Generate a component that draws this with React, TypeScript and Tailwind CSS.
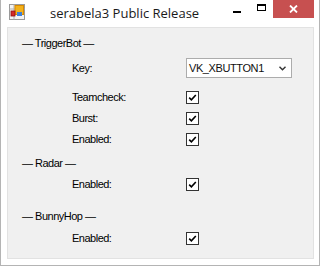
import React from 'react';

const labelFont = { fontFamily: '"Liberation Sans", Arial, sans-serif' };

function AppIcon() {
  return (
    <svg width="16" height="16" viewBox="0 0 16 16">
      <rect x="0.5" y="0.5" width="15" height="15" fill="#f4f4f4" stroke="#9a9a9a" />
      <line x1="0.5" y1="5" x2="15.5" y2="5" stroke="#b0b0b0" />
      <line x1="5" y1="0.5" x2="5" y2="15.5" stroke="#b0b0b0" />
      <rect x="6" y="1.5" width="8.5" height="9" fill="#f3b21b" stroke="#d98a00" />
      <rect x="8" y="8" width="5" height="4" fill="#3f7fd8" />
      <rect x="2" y="7" width="4" height="5" fill="#d42a2a" stroke="#8e1111" strokeWidth="0.8" />
    </svg>
  );
}

function CheckBox() {
  return (
    <div className="w-[13px] h-[13px] border border-[#333333] bg-white flex items-center justify-center">
      <svg width="9" height="9" viewBox="0 0 9 9">
        <path d="M1.2 4.6 L3.4 6.8 L7.8 2" fill="none" stroke="#000" strokeWidth="1.6" />
      </svg>
    </div>
  );
}

function Heading({ text, className }: { text: string; className?: string }) {
  return (
    <div className={`h-[20px] flex items-center pl-[14px] text-[11px] tracking-[-0.5px] text-black ${className ?? ''}`}>
      — {text} —
    </div>
  );
}

function Row({ label, className, children }: { label: string; className?: string; children: React.ReactNode }) {
  return (
    <div className={`h-[20px] flex items-center text-[11px] text-black ${className ?? ''}`}>
      <span className="pl-[64px] w-[178px] tracking-[-0.5px]">{label}</span>
      {children}
    </div>
  );
}

export default function App() {
  return (
    <div className="w-[320px] h-[266px] bg-white border-x border-b border-[#b4b4b4] flex flex-col">
      {/* title bar */}
      <div className="h-[27px] flex items-start">
        <div className="mt-[4px] ml-[8px]">
          <AppIcon />
        </div>
        <div
          className="ml-[25px] mt-[4px] text-[13px] text-[#1a1a1a]"
          style={{ fontFamily: '"Open Sans", "Noto Sans", sans-serif' }}
        >
          serabela3 Public Release
        </div>
        <div className="ml-auto flex items-start">
          <div className="w-[24px] h-[18px] flex items-center justify-center">
            <div className="w-[8px] h-[2px] bg-black mt-[5px]" />
          </div>
          <div className="w-[24px] h-[18px] flex items-center justify-center">
            <div className="w-[9px] h-[7px] border border-black border-t-2 -mt-[4px]" />
          </div>
          <div className="w-[41px] h-[18px] bg-[#c75050] flex items-center justify-center mr-[5px]">
            <svg width="9" height="8" viewBox="0 0 9 8">
              <path d="M1 0.5 L8 7.5 M8 0.5 L1 7.5" stroke="#fff" strokeWidth="1.8" />
            </svg>
          </div>
        </div>
      </div>

      {/* client area */}
      <div
        className="ml-[6px] mr-[5px] h-[232px] bg-[#f0f0f0] border border-[#e2e2e2] pt-[5px]"
        style={labelFont}
      >
        <Heading text="TriggerBot" />
        <Row label="Key:" className="mt-[5px]">
          <div className="w-[106px] h-[20px] bg-white border border-[#acacac] flex items-center pl-[2px] pr-[5px]">
            <span className="text-[#101010] tracking-[-0.4px]">VK_XBUTTON1</span>
            <svg className="ml-auto" width="7" height="5" viewBox="0 0 7 5">
              <path d="M0.5 0.8 L3.5 3.8 L6.5 0.8" fill="none" stroke="#333" strokeWidth="1.4" />
            </svg>
          </div>
        </Row>
        <Row label="Teamcheck:" className="mt-[9px]">
          <CheckBox />
        </Row>
        <Row label="Burst:" className="mt-[1px]">
          <CheckBox />
        </Row>
        <Row label="Enabled:" className="mt-[1px]">
          <CheckBox />
        </Row>
        <Heading text="Radar" className="mt-[4px]" />
        <Row label="Enabled:" className="mt-[1px]">
          <CheckBox />
        </Row>
        <Heading text="BunnyHop" className="mt-[12px]" />
        <Row label="Enabled:" className="mt-[2px]">
          <CheckBox />
        </Row>
      </div>
    </div>
  );
}
